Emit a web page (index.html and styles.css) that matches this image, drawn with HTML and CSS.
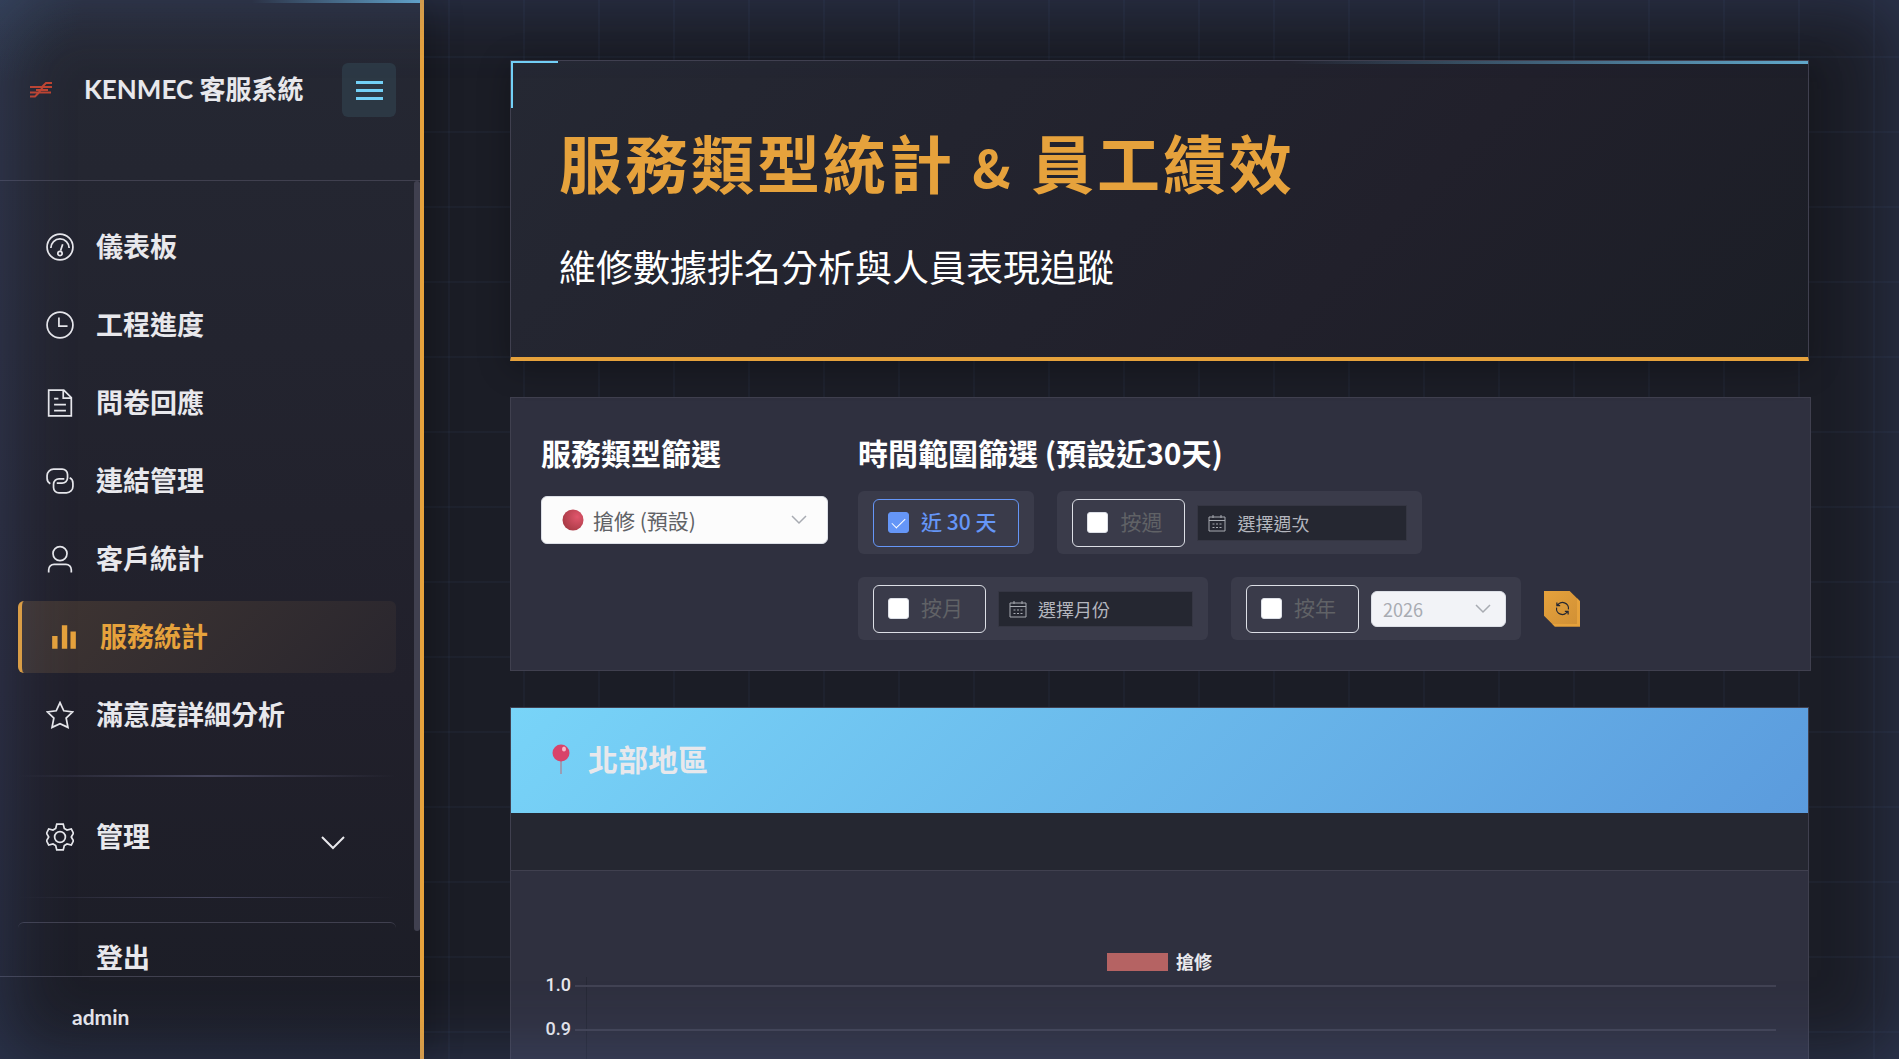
FILE: index.html
```html
<!DOCTYPE html>
<html lang="zh-Hant">
<head>
    <meta charset="UTF-8">
    <meta name="viewport" content="width=device-width, initial-scale=1.0">
    <title>KENMEC 客服系統</title>
    <link rel="stylesheet" href="styles.css">
</head>
<body>
    <div class="layout">
        <!-- Sidebar -->
        <aside class="sidebar">
            <div class="sidebar-header">
                <svg class="logo" viewBox="0 0 22 16" fill="none" stroke="#c0432f" stroke-width="2">
                    <path d="M0 5h12l4-4h6M10 5h12M0 10.500h21M0 14.500h5l4-4M6 8h12M13 5l-4 5"/>
                </svg>
                <span class="brand">KENMEC 客服系統</span>
                <button class="toggle" type="button" aria-label="選單">
                    <span></span>
                    <span></span>
                    <span></span>
                </button>
            </div>

            <nav class="menu">
                <a class="menu-item" href="#">
                    <svg class="icon" viewBox="0 0 26 26">
                        <circle cx="13" cy="13" r="12"/>
                        <path d="M4.500 14a8.500 8.500 0 0 1 17 0M13.500 16.500l2-6"/>
                        <circle cx="13" cy="19" r="2"/>
                    </svg>
                    <span>儀表板</span>
                </a>
                <a class="menu-item" href="#">
                    <svg class="icon" viewBox="0 0 26 26">
                        <circle cx="13" cy="13" r="12"/>
                        <path d="M12 6v8h8"/>
                    </svg>
                    <span>工程進度</span>
                </a>
                <a class="menu-item" href="#">
                    <svg class="icon" viewBox="0 0 26 26">
                        <path d="M2.500 1h14l7 7v17h-21zM16 1v7.500h7.500M7.500 9h4M7.500 14.500h11M7.500 20h11"/>
                    </svg>
                    <span>問卷回應</span>
                </a>
                <a class="menu-item" href="#">
                    <svg class="icon" viewBox="0 0 26 26">
                        <path d="M4 15.500a5.500 5.500 0 0 1-3-5V8a6 6 0 0 1 6-6h8a5 5 0 0 1 5 5v3a5 5 0 0 1-5 5h-5"/>
                        <path d="M22 10a5.500 5.500 0 0 1 3 5v3a6 6 0 0 1-6 6h-7a5 5 0 0 1-5-5v-3a5 5 0 0 1 5-5h5"/>
                    </svg>
                    <span>連結管理</span>
                </a>
                <a class="menu-item" href="#">
                    <svg class="icon" viewBox="0 0 26 26">
                        <circle cx="13" cy="8" r="6.500"/>
                        <path d="M2.500 25.500v-2.500a5 5 0 0 1 5-5h11a5 5 0 0 1 5 5v2.500"/>
                    </svg>
                    <span>客戶統計</span>
                </a>
                <a class="menu-item active" href="#">
                    <svg class="icon icon-fill" viewBox="0 0 26 26">
                        <path d="M2 12h5v12H2zM11 2h5v22h-5zM19 8h5v16h-5z"/>
                    </svg>
                    <span>服務統計</span>
                </a>
                <a class="menu-item" href="#">
                    <svg class="icon" viewBox="0 0 26 26">
                        <path d="M13 1.500l3.500 7.600 8.300 1-6.100 5.700 1.700 8.700-7.400-3.500-7.400 3.500 1.700-8.700-6.100-5.700 8.300-1z"/>
                    </svg>
                    <span>滿意度詳細分析</span>
                </a>
                <div class="divider divider-thick"></div>
                <a class="menu-item" href="#">
                    <svg class="icon" viewBox="0 0 26 26">
                        <path d="M10 1h6l1 4 2.500 1.500 4-1 2 4-2 3.500 2 3.500-2 4-4-1L17 21l-1 4h-6l-1-4-2.500-1.500-4 1-2-4 2-3.500-2-3.500 2-4 4 1L9 5z"/>
                        <circle cx="13" cy="13" r="5"/>
                    </svg>
                    <span>管理</span>
                    <svg class="arrow" viewBox="0 0 24 14"><path d="M1 1l11 11L23 1"/></svg>
                </a>
                <div class="divider"></div>
                <a class="menu-item logout" href="#">
                    <span class="icon"></span>
                    <span>登出</span>
                </a>
                <div class="scroll-thumb"></div>
            </nav>

            <div class="sidebar-footer">admin</div>
        </aside>

        <!-- Main content -->
        <main class="main">
            <header class="page-header">
                <h1>服務類型統計 <span class="amp">&amp;</span> 員工績效</h1>
                <p>維修數據排名分析與人員表現追蹤</p>
            </header>

            <section class="filters">
                <div class="filter">
                    <h2 id="type-title">服務類型篩選</h2>
                    <div class="select select-type">
                        <svg class="dot" viewBox="0 0 22 22">
                            <defs>
                                <radialGradient id="red" cx="0.7" cy="0.35" r="0.75">
                                    <stop offset="0" stop-color="#e0566c"/>
                                    <stop offset="1" stop-color="#a83a45"/>
                                </radialGradient>
                            </defs>
                            <circle cx="11" cy="11" r="10.500" fill="url(#red)"/>
                        </svg>
                        <select aria-labelledby="type-title">
                            <option>搶修 (預設)</option>
                        </select>
                        <svg class="caret" viewBox="0 0 16 10"><path d="M1 1l7 7 7-7"/></svg>
                    </div>
                </div>

                <div class="filter filter-time">
                    <h2>時間範圍篩選 (預設近30天)</h2>
                    <div class="groups">
                        <div class="group">
                            <label class="check checked"><input type="checkbox" checked><span>近 30 天</span></label>
                        </div>
                        <div class="group">
                            <label class="check"><input type="checkbox"><span>按週</span></label>
                            <div class="date date-week">
                                <svg class="calendar" viewBox="0 0 18 18">
                                    <path d="M1 3h16v14H1zM1 6.500h16M5 1v3M13 1v3M4.500 10h2M8 10h2M11.500 10h2M4.500 13.500h2M8 13.500h2M11.500 13.500h2"/>
                                </svg>
                                <input type="text" placeholder="選擇週次" aria-label="選擇週次">
                            </div>
                        </div>
                        <div class="group">
                            <label class="check"><input type="checkbox"><span>按月</span></label>
                            <div class="date date-month">
                                <svg class="calendar" viewBox="0 0 18 18">
                                    <path d="M1 3h16v14H1zM1 6.500h16M5 1v3M13 1v3M4.500 10h2M8 10h2M11.500 10h2M4.500 13.500h2M8 13.500h2M11.500 13.500h2"/>
                                </svg>
                                <input type="text" placeholder="選擇月份" aria-label="選擇月份">
                            </div>
                        </div>
                        <div class="group">
                            <label class="check"><input type="checkbox"><span>按年</span></label>
                            <div class="select select-year">
                                <select aria-label="年份" disabled>
                                    <option>2026</option>
                                </select>
                                <svg class="caret" viewBox="0 0 16 10"><path d="M1 1l7 7 7-7"/></svg>
                            </div>
                        </div>
                        <button class="refresh" type="button" aria-label="重新整理">
                            <svg viewBox="0 0 16 16">
                                <path d="M2 1.500v3.500h3.500M2.500 5a6.300 6.300 0 0 1 11.800 4M14 14.500V11h-3.500M13.500 11A6.300 6.300 0 0 1 1.700 7"/>
                            </svg>
                        </button>
                    </div>
                </div>
            </section>

            <section class="region">
                <div class="region-header">
                    <svg class="pin" viewBox="0 0 18 30">
                        <path d="M8 16h2v14H8z" fill="#9a9db4"/>
                        <circle cx="9" cy="9" r="8.500" fill="#d8436a"/>
                        <ellipse cx="12" cy="5" rx="2" ry="2.500" fill="#f5b8cb"/>
                    </svg>
                    <h2>北部地區</h2>
                </div>
                <div class="region-bar"></div>
                <div class="chart">
                    <div class="legend"><span class="swatch"></span><span>搶修</span></div>
                    <div class="plot">
                        <div class="tick"><span>1.0</span></div>
                        <div class="tick"><span>0.9</span></div>
                    </div>
                </div>
            </section>
        </main>
    </div>
    <div class="glow"></div>
</body>
</html>
```
FILE: styles.css
```css
* {
    box-sizing: border-box;
}

body {
    margin: 0;
    height: 100vh;
    overflow: hidden;
    color: #e8e8ec;
    background: #1b1d26;
    font-family: "Noto Sans CJK TC", "Noto Sans", sans-serif;
}

h1, h2, p {
    margin: 0;
}

button, input, select {
    font-family: inherit;
}

.layout {
    display: flex;
    height: 100vh;
}

/* Sidebar */
.sidebar {
    position: relative;
    z-index: 1;
    flex: 0 0 424px;
    display: flex;
    flex-direction: column;
    border-right: 4px solid #e6a23c;
    background: linear-gradient(180deg, #252833, #21202b 65%, #1b1d26);
    box-shadow: 6px 0 30px rgba(0, 0, 0, 0.3);
}

.sidebar::before,
.page-header::before {
    content: "";
    position: absolute;
    top: 0;
    right: 0;
    width: 40%;
    height: 3px;
    background: linear-gradient(90deg, transparent, #62a9cc);
}

.sidebar-header {
    flex: 0 0 181px;
    display: flex;
    align-items: center;
    padding: 0 24px 0 30px;
    border-bottom: 1px solid #40404f;
}

.logo {
    width: 22px;
    height: 16px;
    margin-right: 32px;
}

.brand {
    flex: 1;
    padding-bottom: 5px;
    font-family: Lato, "Noto Sans CJK TC", sans-serif;
    font-size: 26px;
    font-weight: 700;
    white-space: nowrap;
}

.toggle {
    display: flex;
    flex-direction: column;
    align-items: center;
    justify-content: center;
    gap: 5px;
    width: 54px;
    height: 54px;
    border: none;
    border-radius: 6px;
    background: #2c3844;
    cursor: pointer;
}

.toggle span {
    width: 27px;
    height: 3px;
    background: #73d1f7;
}

.menu {
    position: relative;
    flex: 1;
    min-height: 0;
    overflow: hidden;
    padding: 30px 24px 0 18px;
}

.scroll-thumb {
    position: absolute;
    top: 0;
    right: 0;
    width: 6px;
    height: 750px;
    border-radius: 3px;
    background: #40404f;
}

.menu-item {
    display: flex;
    align-items: center;
    height: 72px;
    margin-bottom: 6px;
    padding: 0 30px 0 28px;
    border-radius: 6px;
    color: #e8e8ec;
    font-size: 27px;
    font-weight: 700;
    line-height: 30px;
    text-decoration: none;
}

.menu-item span,
.check span,
.legend span:last-child {
    padding-bottom: 3px;
}

.icon {
    flex: none;
    width: 28px;
    height: 28px;
    margin-right: 22px;
    fill: none;
    stroke: currentColor;
    stroke-width: 1.6;
}

.icon-fill {
    fill: currentColor;
    stroke: none;
}

.menu-item.active {
    border-left: 4px solid #e6a23c;
    color: #e6a23c;
    background: linear-gradient(135deg, #3f3532, #29262e);
}

.arrow {
    width: 24px;
    height: 14px;
    margin: 12px 21px 0 auto;
    fill: none;
    stroke: currentColor;
    stroke-width: 2;
}

.divider {
    height: 1px;
    margin: 24px 0;
    background: linear-gradient(90deg, transparent, #44445a, transparent);
}

.divider-thick {
    height: 2px;
}

.logout {
    border-top: 1px solid #40404f;
}

.sidebar-footer {
    flex: 0 0 83px;
    padding-left: 72px;
    border-top: 1px solid #40404f;
    font-family: Lato, "Noto Sans", sans-serif;
    font-size: 21px;
    font-weight: 700;
    line-height: 80px;
}

/* Main content */
.main {
    flex: 1;
    min-width: 0;
    display: flex;
    flex-direction: column;
    gap: 36px;
    padding: 60px 88px 0 86px;
    background:
        repeating-linear-gradient(0deg, transparent 0 73px, rgba(90, 120, 170, 0.06) 73px 75px) 0 56px / 75px 75px,
        repeating-linear-gradient(90deg, transparent 0 73px, rgba(90, 120, 170, 0.06) 73px 75px) 26px 0 / 75px 75px;
}

.page-header {
    position: relative;
    margin-right: 2px;
    padding: 60px 48px 64px;
    border: 1px solid #40404f;
    border-bottom: 4px solid #e6a23c;
    background: linear-gradient(135deg, #252833, #21202b 65%, #1b1e26);
    box-shadow: 0 6px 30px rgba(0, 0, 0, 0.3);
}

.page-header::after {
    content: "";
    position: absolute;
    top: 0;
    left: 0;
    width: 45px;
    height: 45px;
    border-top: 2px solid #73d1f7;
    border-left: 2px solid #73d1f7;
}

.page-header h1 {
    color: #e6a23c;
    font-size: 63px;
    line-height: 80px;
    letter-spacing: 3px;
}

.page-header .amp {
    font-size: 52px;
    line-height: 40px;
}

.page-header p {
    margin-top: 38px;
    color: #fff;
    font-size: 37px;
    line-height: 54px;
}

/* Filters */
.filters {
    display: flex;
    gap: 30px;
    padding: 30px;
    border: 1px solid #40404f;
    background: #2f303f;
}

.filter h2 {
    margin-bottom: 15px;
    color: #fff;
    font-size: 30px;
    line-height: 48px;
}

.filter-time {
    flex: 1;
}

.select {
    display: flex;
    align-items: center;
    padding: 0 20px;
    border: 1px solid #dcdfe6;
    border-radius: 6px;
    background: #fcfcfc;
}

.select select {
    flex: 1;
    width: 100%;
    padding: 0;
    border: none;
    color: #606266;
    background: transparent;
    font-size: 21px;
    opacity: 1;
    appearance: none;
}

.select-type {
    width: 287px;
    height: 48px;
    margin-top: 20px;
}

.dot {
    flex: none;
    width: 22px;
    height: 22px;
    margin-right: 9px;
}

.caret {
    flex: none;
    width: 16px;
    height: 10px;
    fill: none;
    stroke: #a8abb2;
    stroke-width: 1.5;
}

.groups {
    display: flex;
    flex-wrap: wrap;
    align-items: center;
    gap: 23px;
}

.group {
    display: flex;
    align-items: center;
    gap: 12px;
    height: 63px;
    padding: 0 15px;
    border-radius: 6px;
    background: #3a3b4a;
}

.check {
    display: flex;
    align-items: center;
    height: 48px;
    padding: 0 22px 0 14px;
    border: 1px solid #dcdfe6;
    border-radius: 6px;
    color: #606266;
    font-size: 21px;
}

.check input {
    display: grid;
    place-content: center;
    width: 21px;
    height: 21px;
    margin: 0 12px 0 0;
    border: 1px solid #dcdfe6;
    border-radius: 3px;
    background: #fff;
    appearance: none;
}

.check input:checked {
    border-color: #6596f7;
    background: #6596f7;
}

.check input:checked::before {
    content: "";
    width: 6px;
    height: 12px;
    margin-bottom: 3px;
    border: solid #fff;
    border-width: 0 1px 1px 0;
    transform: rotate(45deg);
}

.check.checked {
    border-color: #6596f7;
    color: #6596f7;
    font-weight: 500;
}

.date {
    display: flex;
    align-items: center;
    height: 36px;
    padding: 0 10px;
    border: 1px solid #353643;
    background: #252731;
}

.date-week {
    width: 210px;
}

.date-month {
    width: 195px;
}

.calendar {
    flex: none;
    width: 18px;
    height: 18px;
    margin-right: 11px;
    fill: none;
    stroke: #a8abb2;
}

.date input {
    width: 100%;
    padding: 0;
    border: none;
    outline: none;
    color: #c8c9d0;
    background: transparent;
    font-size: 18px;
}

.date input::placeholder {
    color: #b4b6be;
}

.select-year {
    width: 135px;
    height: 36px;
    padding: 0 14px 0 11px;
    background: #f2f3f7;
}

.select-year select {
    color: #a8abb2;
    font-size: 18px;
}

.refresh {
    display: grid;
    place-items: center;
    width: 36px;
    height: 36px;
    padding: 0;
    border: none;
    background: linear-gradient(135deg, #e6a23c, #cf8f35);
    box-shadow: inset -3px -3px 0 #e6a23c;
    clip-path: polygon(0 0, 70% 0, 100% 30%, 100% 100%, 30% 100%, 0 70%);
    cursor: pointer;
}

.refresh svg {
    width: 15px;
    height: 15px;
    fill: none;
    stroke: #252731;
    stroke-width: 1.3;
}

/* Region card */
.region {
    flex: 1;
    display: flex;
    flex-direction: column;
    margin-right: 2px;
    border: 1px solid #40404f;
    border-bottom: none;
    background: #2f303f;
}

.region-header {
    display: flex;
    align-items: center;
    gap: 18px;
    height: 105px;
    padding: 0 41px 4px;
    background: linear-gradient(135deg, #78d4f8, #5b9bdd);
}

.region-header h2 {
    padding-bottom: 2px;
    font-size: 30px;
    line-height: 48px;
}

.pin {
    width: 18px;
    height: 30px;
}

.region-bar {
    height: 58px;
    border-bottom: 1px solid #40404f;
    background: #252731;
}

.chart {
    flex: 1;
    display: flex;
    flex-direction: column;
    padding: 76px 32px 0;
}

.legend {
    display: flex;
    align-items: center;
    justify-content: center;
    gap: 8px;
    height: 30px;
    font-size: 18px;
    font-weight: 700;
}

.swatch {
    width: 61px;
    height: 18px;
    background: #b56363;
}

.plot {
    flex: 1;
    margin-left: 43px;
    border-left: 1px solid #272936;
}

.tick {
    height: 44px;
    margin-top: 8px;
    margin-left: -12px;
    border-top: 2px solid #424353;
}

.tick + .tick {
    margin-top: 0;
}

.tick span {
    float: left;
    width: 40px;
    margin: -12px 0 0 -44px;
    font-family: Roboto, "Liberation Sans", sans-serif;
    font-size: 18px;
    font-weight: 500;
    line-height: 20px;
    text-align: right;
}

/* Light around the edge of the window */
.glow {
    position: fixed;
    inset: 0;
    z-index: 2;
    pointer-events: none;
    background: radial-gradient(circle at 0 0, rgba(115, 209, 247, 0.06), transparent 90px);
    box-shadow: inset 0 0 75px rgba(90, 115, 185, 0.3);
}
```
